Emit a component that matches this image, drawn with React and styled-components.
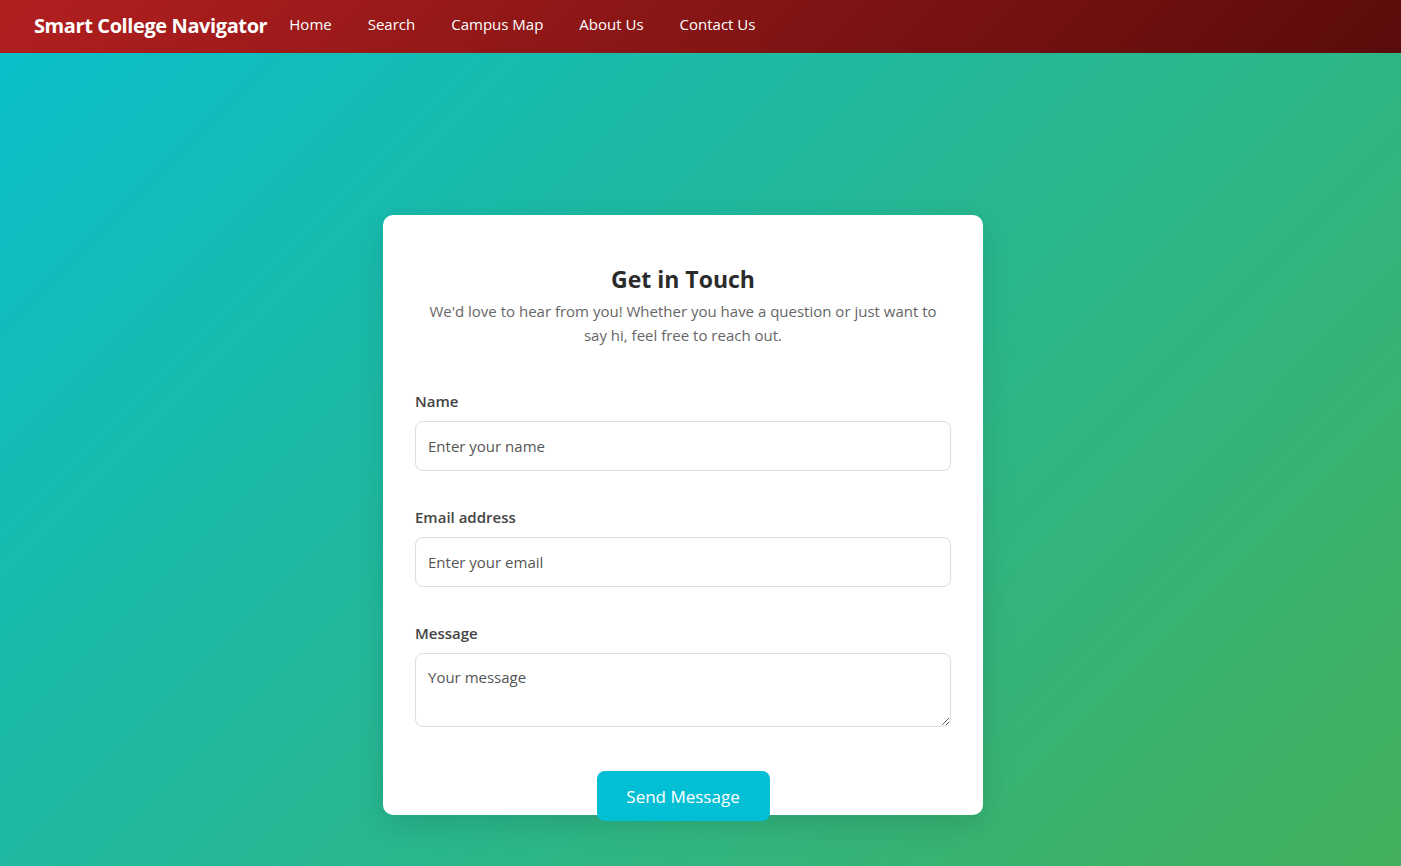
import React from "react";
import styled, { createGlobalStyle } from "styled-components";

const links = ["Home", "Search", "Campus Map", "About Us", "Contact Us"];

function App() {
  return (
    <>
      <GlobalStyle />
      <Page>
        <NavBar>
          <Brand>Smart College Navigator</Brand>
          <NavLinks>
            {links.map((l) => (
              <NavLink key={l} href="#">
                {l}
              </NavLink>
            ))}
          </NavLinks>
        </NavBar>

        <Main>
          <Card>
            <Title>Get in Touch</Title>
            <Intro>
              We'd love to hear from you! Whether you have a question or just
              want to say hi, feel free to reach out.
            </Intro>

            <Form onSubmit={(e) => e.preventDefault()}>
              <Field>
                <Label htmlFor="name">Name</Label>
                <Input id="name" type="text" placeholder="Enter your name" />
              </Field>
              <Field>
                <Label htmlFor="email">Email address</Label>
                <Input id="email" type="email" placeholder="Enter your email" />
              </Field>
              <Field>
                <Label htmlFor="message">Message</Label>
                <TextArea id="message" rows={3} placeholder="Your message" />
              </Field>
              <ButtonRow>
                <SendButton type="submit">Send Message</SendButton>
              </ButtonRow>
            </Form>
          </Card>
        </Main>
      </Page>
    </>
  );
}

export default App;

// --- Styled Components ---

const GlobalStyle = createGlobalStyle`
  * { box-sizing: border-box; }
  html, body { margin: 0; padding: 0; }
  body {
    font-family: "Open Sans", "Noto Sans", "DejaVu Sans", sans-serif;
    overflow: hidden;
  }
`;

const Page = styled.div`
  min-height: 100vh;
  display: flex;
  flex-direction: column;
  background: linear-gradient(135deg, #08bfcc 0%, #44b05b 100%);
`;

const NavBar = styled.nav`
  height: 53px;
  display: flex;
  align-items: center;
  padding: 0 34px 2px;
  background: linear-gradient(135deg, #b21f1f 0%, #5a0b0b 100%);
`;

const Brand = styled.div`
  font-size: 20px;
  font-weight: 700;
  color: #fff;
  letter-spacing: -0.4px;
  margin-right: 22px;
`;

const NavLinks = styled.div`
  display: flex;
  gap: 36px;
  padding-bottom: 4px;
`;

const NavLink = styled.a`
  color: #fff;
  text-decoration: none;
  font-size: 15px;
`;

const Main = styled.main`
  flex: 1;
  display: flex;
  justify-content: center;
  align-items: flex-start;
  padding: 162px 35px 0 0;
`;

const Card = styled.div`
  width: 600px;
  height: 600px;
  background: #fff;
  border-radius: 10px;
  padding: 50px 32px 0;
  box-shadow: 0 10px 30px rgba(0, 0, 0, 0.12);
`;

const Title = styled.h2`
  margin: 0 0 5px;
  text-align: center;
  font-size: 23px;
  line-height: 29px;
  font-weight: 700;
  color: #2b2b2b;
`;

const Intro = styled.p`
  margin: 0;
  padding: 0 10px;
  text-align: center;
  font-size: 15px;
  line-height: 24px;
  color: #666;
`;

const Form = styled.form`
  margin-top: 42px;
  display: flex;
  flex-direction: column;
  gap: 34px;
`;

const Field = styled.div`
  display: flex;
  flex-direction: column;
  gap: 8px;
`;

const Label = styled.label`
  font-size: 15px;
  line-height: 24px;
  font-weight: 600;
  color: #444;
`;

const Input = styled.input`
  height: 50px;
  width: 100%;
  padding: 0 12px;
  border: 1px solid #ddd;
  border-radius: 8px;
  font-family: inherit;
  font-size: 15px;
  color: #333;
  outline: none;

  &::placeholder {
    color: #555;
  }
`;

const TextArea = styled.textarea`
  height: 74px;
  width: 100%;
  padding: 12px;
  border: 1px solid #ddd;
  border-radius: 8px;
  font-family: inherit;
  font-size: 15px;
  line-height: 22px;
  color: #333;
  outline: none;

  &::placeholder {
    color: #555;
  }
`;

const ButtonRow = styled.div`
  display: flex;
  justify-content: center;
  margin-top: 10px;
`;

const SendButton = styled.button`
  width: 173px;
  height: 50px;
  border: none;
  border-radius: 8px;
  background: #02bfd6;
  color: #fff;
  font-family: inherit;
  font-size: 17px;
  cursor: pointer;
`;
